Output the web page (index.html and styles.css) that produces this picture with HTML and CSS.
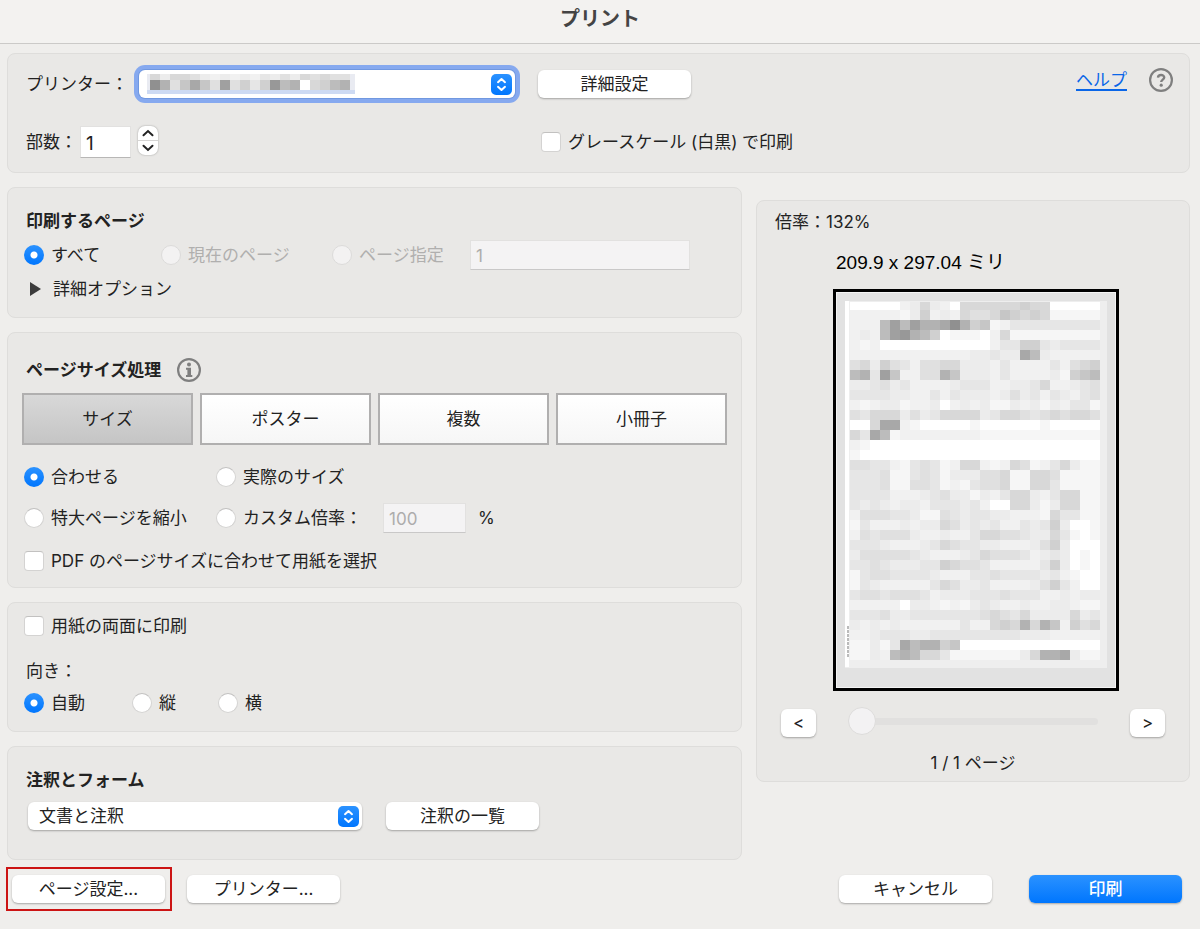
FILE: index.html
```html
<!DOCTYPE html>
<html lang="ja">
<head>
  <meta charset="UTF-8" />
  <meta name="viewport" content="width=device-width, initial-scale=1.0" />
  <title>プリント</title>
  <link rel="stylesheet" href="styles.css">
</head>
<body>
  <header class="titlebar">
    <h1>プリント</h1>
  </header>

  <main>
    <section class="panel printer">
      <div class="printer-main">
        <div class="row printer-row">
          <label class="text" for="printer">プリンター：</label>
          <div class="select focused">
            <select id="printer"><option></option></select>
            <svg class="printer-name" id="printerName" width="208" height="20" viewBox="0 0 208 20" shape-rendering="crispEdges"></svg>
            <svg class="arrows" width="21" height="21" viewBox="0 0 21 21"><use href="#arrows" /></svg>
          </div>
        </div>
        <div class="row copies-row">
          <label class="text" for="copies">部数：</label>
          <input type="text" class="field copies" id="copies" value="1">
          <div class="stepper">
            <button type="button" aria-label="増やす"><svg width="12" height="8" viewBox="0 0 12 8"><path d="M1.5 6.2 6 2l4.500 4.200" /></svg></button>
            <button type="button" aria-label="減らす"><svg width="12" height="8" viewBox="0 0 12 8"><path d="M1.500 1.800 6 6l4.500-4.200" /></svg></button>
          </div>
        </div>
      </div>
      <div class="printer-side">
        <div class="row printer-row"><button type="button" class="btn">詳細設定</button></div>
        <div class="row copies-row"><label class="option gray"><input type="checkbox">グレースケール (白黒) で印刷</label></div>
      </div>
      <div class="help">
        <a href="#help">ヘルプ</a>
        <svg width="24" height="24" viewBox="0 0 24 24">
          <circle cx="12" cy="12" r="10.900" fill="none" stroke="#7f7f7f" stroke-width="2.200" />
          <path d="M9 9.600c.2-3.400 6.200-3.400 6.200-.1 0 2-3 2.200-3 4.500" fill="none" stroke="#7f7f7f" stroke-width="2.400" />
          <circle cx="12.200" cy="17.200" r="1.600" fill="#7f7f7f" />
        </svg>
      </div>
    </section>

    <div class="columns">
      <div class="settings">
        <section class="panel pages">
          <h2>印刷するページ</h2>
          <div class="range">
            <label class="option"><input type="radio" name="range" checked>すべて</label>
            <label class="option"><input type="radio" name="range" disabled>現在のページ</label>
            <label class="option"><input type="radio" name="range" disabled>ページ指定</label>
            <input type="text" class="field" value="1" aria-label="ページ指定" disabled>
          </div>
          <details>
            <summary><svg width="11" height="14" viewBox="0 0 11 14"><path d="M0 0 11 7 0 14z" /></svg>詳細オプション</summary>
          </details>
        </section>

        <section class="panel sizing">
          <div class="row sizing-title">
            <h2>ページサイズ処理</h2>
            <svg width="24" height="24" viewBox="0 0 24 24">
              <circle cx="12" cy="12" r="10.900" fill="none" stroke="#7f7f7f" stroke-width="2.200" />
              <circle cx="12" cy="6.600" r="2" fill="#7f7f7f" />
              <path d="M9 9.800h5v7.200h1.300v2H9v-2h1.400v-5.200H9z" fill="#7f7f7f" />
            </svg>
          </div>
          <div class="tabs">
            <button type="button" class="active">サイズ</button>
            <button type="button">ポスター</button>
            <button type="button">複数</button>
            <button type="button">小冊子</button>
          </div>
          <div class="scale">
            <label class="option"><input type="radio" name="scale" checked>合わせる</label>
            <label class="option"><input type="radio" name="scale">実際のサイズ</label>
          </div>
          <div class="scale custom">
            <label class="option"><input type="radio" name="scale">特大ページを縮小</label>
            <div class="row custom-scale">
              <label class="option"><input type="radio" name="scale">カスタム倍率：</label>
              <input type="text" class="field" id="percent" value="100" disabled>
              <label for="percent">%</label>
            </div>
          </div>
          <label class="option"><input type="checkbox">PDF のページサイズに合わせて用紙を選択</label>
        </section>

        <section class="panel orientation">
          <label class="option"><input type="checkbox">用紙の両面に印刷</label>
          <p class="text">向き：</p>
          <div class="directions">
            <label class="option"><input type="radio" name="dir" checked>自動</label>
            <label class="option"><input type="radio" name="dir">縦</label>
            <label class="option"><input type="radio" name="dir">横</label>
          </div>
        </section>

        <section class="panel comments">
          <h2><label for="comments">注釈とフォーム</label></h2>
          <div class="row comments-row">
            <div class="select">
              <select id="comments"><option>文書と注釈</option></select>
              <svg class="arrows" width="21" height="21" viewBox="0 0 21 21"><use href="#arrows" /></svg>
            </div>
            <button type="button" class="btn">注釈の一覧</button>
          </div>
        </section>
      </div>

      <section class="panel preview">
        <p>倍率：132%</p>
        <figure>
          <figcaption>209.9 x 297.04 ミリ</figcaption>
          <svg id="page" width="286" height="402" viewBox="0 0 286 402" shape-rendering="crispEdges">
            <rect width="286" height="402" fill="#000" />
            <rect x="3" y="3" width="280" height="396" fill="#f4f4f4" />
            <rect x="4" y="4" width="278" height="394" fill="#e2e2e2" />
            <rect x="12" y="12" width="262" height="367" fill="#eee" />
            <rect x="12" y="12" width="4" height="366" fill="#fff" />
            <path d="M15 337v31" stroke="#bbb" stroke-width="2" stroke-dasharray="3 1" />
          </svg>
        </figure>
        <div class="row pager">
          <button type="button" class="btn">&lt;</button>
          <input type="range" min="1" max="2" value="1" aria-label="ページ" disabled>
          <button type="button" class="btn">&gt;</button>
        </div>
        <p class="page-count">1 / 1 ページ</p>
      </section>
    </div>
  </main>

  <footer>
    <div class="highlight"><button type="button" class="btn">ページ設定...</button></div>
    <button type="button" class="btn">プリンター...</button>
    <button type="button" class="btn cancel">キャンセル</button>
    <button type="submit" class="btn primary">印刷</button>
  </footer>

  <svg width="0" height="0" class="defs">
    <defs>
      <linearGradient id="blue" x1="0" y1="0" x2="0" y2="1">
        <stop offset="0" stop-color="#2b92ff" />
        <stop offset="1" stop-color="#0076fe" />
      </linearGradient>
      <symbol id="arrows" viewBox="0 0 21 21">
        <rect width="21" height="21" rx="5" fill="url(#blue)" />
        <path d="M7 8.200 10.500 5 14 8.200M7 12.800l3.500 3.200 3.500-3.200" fill="none" stroke="#fff" stroke-width="2" stroke-linecap="round" stroke-linejoin="round" />
      </symbol>
    </defs>
  </svg>

  <script src="script.js"></script>
</body>
</html>
```

FILE: styles.css
```css
* {
  box-sizing: border-box;
}

body {
  margin: 0;
  font-family: Inter, "Noto Sans CJK JP", sans-serif;
  font-size: 17px;
  line-height: 24px;
  color: #222;
  background-color: #efeeec;
}

button,
input,
select {
  font: inherit;
  color: inherit;
  margin: 0;
}

h1,
h2,
p,
figure {
  margin: 0;
}

h2 {
  padding-left: 2px;
  font-size: 17px;
  line-height: 24px;
  font-weight: bold;
}

.defs {
  position: absolute;
}

.titlebar {
  height: 44px;
  padding-top: 7px;
  text-align: center;
  background-color: #f3f2f0;
  border-bottom: 1px solid #cbcac8;
}

.titlebar h1 {
  font-size: 20px;
  line-height: 24px;
  color: #444;
}

main {
  padding: 9px 10px 0 7px;
}

.panel {
  padding: 0 16px;
  background-color: #e9e8e6;
  border: 1px solid #dedddb;
  border-radius: 8px;
}

.row {
  display: flex;
  align-items: center;
}

.text {
  padding-left: 2px;
}

/* printer */
.printer {
  display: flex;
  padding-top: 11px;
  padding-bottom: 14px;
}

.printer-main {
  width: 514px;
}

.printer-side {
  flex: 1;
}

.printer-row {
  height: 38px;
  gap: 11px;
  margin-bottom: 23px;
}

.copies-row {
  height: 32px;
}

.copies-row .text {
  margin-right: 3px;
}

.gray {
  padding-left: 3px;
}

.help {
  display: flex;
  gap: 22px;
  padding-top: 3px;
}

.help a {
  color: #0a66e8;
  text-underline-offset: 3px;
  text-decoration-thickness: 2px;
}

/* controls */
.btn {
  width: 153px;
  height: 28px;
  padding: 0;
  line-height: 28px;
  background-color: #fff;
  border: none;
  border-radius: 6px;
  box-shadow: 0 1px 2px rgba(0, 0, 0, 0.3);
}

.primary {
  color: #fff;
  font-weight: 500;
  background: linear-gradient(#2b92ff, #0076fe);
}

.select {
  position: relative;
  width: 334px;
}

.select select {
  display: block;
  appearance: none;
  width: 100%;
  height: 28px;
  padding: 0 30px 0 11px;
  line-height: 28px;
  background-color: #fff;
  border: none;
  border-radius: 6px;
  box-shadow: 0 1px 2px rgba(0, 0, 0, 0.3);
}

.focused {
  width: 376px;
}

.focused select {
  outline: none;
  box-shadow: 0 0 0 1px #7198e0, 0 0 0 5px #86a9ef;
}

.arrows {
  position: absolute;
  top: 4px;
  right: 3px;
  pointer-events: none;
}

.printer-name {
  position: absolute;
  top: 4px;
  left: 8px;
  pointer-events: none;
}

.field {
  width: 100%;
  height: 30px;
  padding: 2px 5px 0;
  background-color: #fff;
  border: 1px solid #e2e1e0;
  border-bottom-color: #b8b7b6;
  border-radius: 0;
}

.field:disabled {
  color: #adacac;
  background-color: #f4f3f4;
  border-bottom-color: #c9c8c8;
}

.copies {
  width: 51px;
  height: 32px;
  font-size: 19px;
}

.stepper {
  display: flex;
  flex-direction: column;
  width: 20px;
  height: 29px;
  margin: 0 0 3px 7px;
  background-color: #fff;
  border-radius: 7px;
  box-shadow: 0 0 2px rgba(0, 0, 0, 0.35);
}

.stepper button {
  display: flex;
  flex: 1;
  align-items: center;
  justify-content: center;
  padding: 0;
  background: none;
  border: none;
}

.stepper button + button {
  border-top: 1px solid #d5d4d3;
}

.stepper path {
  fill: none;
  stroke: #222;
  stroke-width: 2;
  stroke-linecap: round;
}

.option {
  display: flex;
  align-items: center;
  gap: 7px;
  white-space: nowrap;
}

.option input {
  appearance: none;
  flex: none;
  width: 20px;
  height: 20px;
  background-color: #fff;
  border: 1px solid #d4d3d2;
  border-top-color: #c2c1c0;
  border-radius: 4px;
}

.option input[type="radio"] {
  border-radius: 50%;
}

.option input[type="radio"]:checked {
  background: radial-gradient(circle, #fff 3px, transparent 4px), linear-gradient(#2b92ff, #0076fe);
  background-origin: border-box;
  border: none;
}

.option:has(input:disabled) {
  color: #b0afae;
}

.option input:disabled {
  background-color: #f3f2f2;
  border-color: #dcdbda;
}

/* page range */
.settings {
  display: flex;
  flex-direction: column;
  gap: 14px;
}

.columns {
  display: grid;
  grid-template-columns: 735fr 434fr;
  align-items: start;
  gap: 14px;
  margin-top: 14px;
}

.pages {
  padding-top: 21px;
  padding-bottom: 16px;
}

.range {
  display: grid;
  grid-template-columns: 137px 171px 138px 220px;
  align-items: center;
  margin: 7px 0;
}

summary {
  display: flex;
  align-items: center;
  gap: 12px;
  padding-left: 6px;
  list-style: none;
}

summary path {
  fill: #3c3c3c;
}

/* page sizing */
.sizing {
  padding-top: 25px;
  padding-bottom: 14px;
}

.sizing-title {
  gap: 16px;
}

.tabs {
  display: grid;
  grid-template-columns: repeat(4, 1fr);
  gap: 7px;
  margin: 11px -2px 20px;
}

.tabs button {
  height: 52px;
  padding: 0;
  background: linear-gradient(#fff, #f6f6f6);
  border: 2px solid #b0afaf;
}

.tabs .active {
  background: linear-gradient(#d8d8d8, #c5c5c5);
}

.scale {
  display: grid;
  grid-template-columns: 192px 1fr;
}

.custom {
  margin: 14px 0 16px;
}

.custom-scale .field {
  width: 83px;
  margin: 0 12px 0 21px;
}

/* orientation */
.orientation {
  padding-top: 11px;
  padding-bottom: 16px;
}

.orientation p {
  margin: 21px 0 8px;
}

.directions {
  display: grid;
  grid-template-columns: 108px 86px 1fr;
}

/* comments and forms */
.comments {
  padding-top: 21px;
  padding-bottom: 29px;
}

.comments-row {
  gap: 24px;
  padding: 10px 0 0 4px;
}

/* preview */
.preview {
  margin-top: 13px;
  padding: 9px 18px 6px;
}

.preview figure {
  width: 292px;
  margin: 17px auto 18px;
  padding-left: 6px;
}

.preview figcaption {
  margin-bottom: 14px;
  padding-left: 3px;
  font-family: "Liberation Sans", "Noto Sans CJK JP", sans-serif;
  font-size: 19px;
  color: #000;
}

.preview svg {
  display: block;
}

.pager {
  justify-content: space-between;
  padding: 0 6px;
}

.pager .btn {
  width: 35px;
}

.pager input {
  appearance: none;
  width: 250px;
  height: 24px;
  margin-bottom: 4px;
  background: none;
}

.pager input::-webkit-slider-runnable-track {
  height: 7px;
  background-color: #e1e0df;
  border-radius: 4px;
}

.pager input::-webkit-slider-thumb {
  appearance: none;
  width: 28px;
  height: 28px;
  margin-top: -11px;
  background-color: #f3f2f3;
  border: 1px solid #dddcdb;
  border-radius: 50%;
}

.page-count {
  margin-top: 14px;
  text-align: center;
}

/* footer */
footer {
  display: flex;
  align-items: center;
  padding: 7px 18px 18px 6px;
}

.highlight {
  display: flex;
  margin-right: 15px;
  padding: 6px 5px 6px 4px;
  border: 2px solid #cc1414;
}

.cancel {
  margin-left: auto;
  margin-right: 37px;
}
```

FILE: script.js
```js
// gray levels, one hex digit per 10px cell, dark to light
const levels = [136, 144, 152, 160, 168, 178, 188, 198, 208, 216, 224, 230, 236, 241, 246, 255];

const pageRows = [
  'fffffdc9cdf999999899fffff',
  'dddddec8dcd9aa978989eeeee',
  'ddd63635541587edbbbbbbbbb',
  'dcd632568feeefd9eeeeeeeee',
  'dedfffffffffffdbb88bcbbbb',
  'ddddddddddddccbcc46cddddd',
  'a9c8abdaa99cccdbddddbda98',
  '65b37ddaa57cccdbddddce876',
  'ccbacbddddcbbbddccb9ddcba',
  'bbbbccddbdbcccdcacbdbcdba',
  'dedcceddcfdcdceecdcecdbbe',
  'ab999cacb9999cb99aba9a99a',
  'ff944defffffeffffffefffff',
  '9b46eddddddddeeeeeeeeeeee',
  'defffffffffffffffffffffff',
  'effffffffffffffffffffffff',
  'aabbdebabed99ded9aedb9cee',
  'bbbaeebabecccaa9ee99aeeee',
  'bbbaeeaabedebaa9ee99beeee',
  'bbbbdddcbaccecdb99cdb99ee',
  'bcbcdccdbbbcbdff99cec99ee',
  'daaabbceeabcbbccddde9bbee',
  'ebdddcdcc9acbcbddbcb8cffe',
  'dabaaacddcddb99aabcc9befe',
  'bbbcdddcb9abbccdddca8cfff',
  'caaaaabcdddcb9aaabdcbcfef',
  'bbabcccbb89aabdddddb8cfef',
  'ebaabbbbcdddbbabbbbcbdeff',
  'ebcdddddb9accbddddca8bdff',
  'baabaaabdcccbbbabbbddcdcc',
  'dddddfccdedecbcddcddccdee',
  'bbbaccbbbbbbba9ab9cccc9cb',
  'cdcdcddddddbdd9895957d8a9',
  'ddcbbbccbbbbbbbbbcccddddd',
  'eeceb465587ffffffffffffff',
  'eecd65699beeeeeeec9554cee'
];

const nameRows = [
  { y: 0, h: 6, cells: '9c99acdcdcdbcac9a9aa' },
  { y: 6, h: 10, cells: '15a747a3a8b8265f9865' }
];

function addRect(svg, x, y, w, h, color) {
  const rect = document.createElementNS('http://www.w3.org/2000/svg', 'rect');
  rect.setAttribute('x', x);
  rect.setAttribute('y', y);
  rect.setAttribute('width', w);
  rect.setAttribute('height', h);
  rect.setAttribute('fill', color);
  svg.appendChild(rect);
}

function drawCells(svg, cells, x, y, h) {
  [...cells].forEach((c, i) => {
    const v = levels[parseInt(c, 16)];
    addRect(svg, x + i * 10, y, 10, h, `rgb(${v}, ${v}, ${v})`);
  });
}

const page = document.getElementById('page');
pageRows.forEach((cells, i) => {
  // the first row is cut off by the paper edge
  const top = i === 0 ? 13 : 11 + i * 10;
  drawCells(page, cells, 17, top, i === 0 ? 8 : 10);
});

const printerName = document.getElementById('printerName');
addRect(printerName, 0, 0, 208, 16, '#e9ebf2');
addRect(printerName, 0, 16, 208, 4, '#cddaf3');
nameRows.forEach(row => drawCells(printerName, row.cells, 3, row.y, row.h));
```
